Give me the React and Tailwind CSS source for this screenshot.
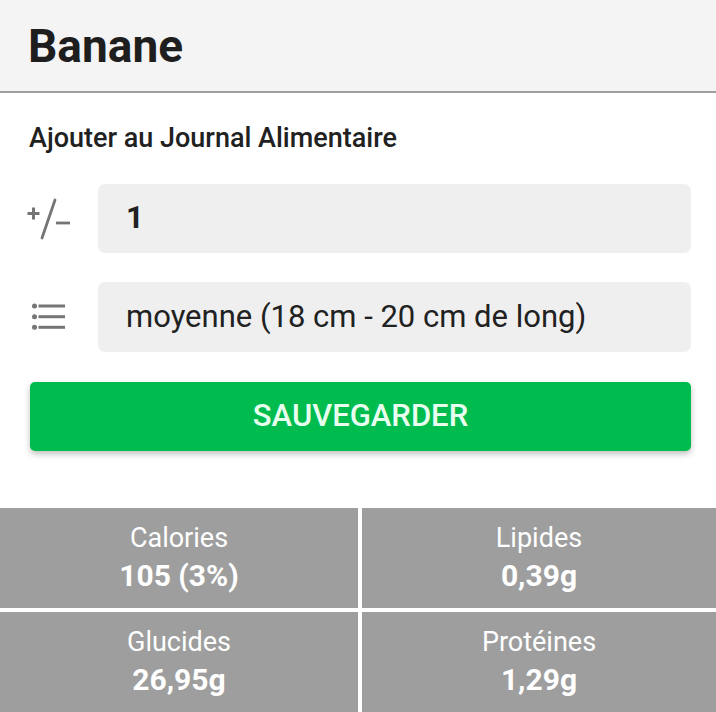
import React from "react";

function PlusMinus() {
  return (
    <svg width="46" height="42" viewBox="0 0 46 42" fill="none" stroke="#757575">
      <path d="M1.5 15.5h12M7.5 9.5v12" strokeWidth="3" />
      <path d="M29 2L16 40" strokeWidth="2.8" strokeLinecap="round" />
      <path d="M30 25h14" strokeWidth="2.8" />
    </svg>
  );
}

function ListIcon() {
  return (
    <svg width="36" height="28" viewBox="0 0 36 28" fill="#757575">
      <circle cx="3.5" cy="3" r="2.5" />
      <circle cx="3.5" cy="13.7" r="2.5" />
      <circle cx="3.5" cy="24.3" r="2.5" />
      <rect x="7.5" y="1.5" width="26.5" height="3" />
      <rect x="7.5" y="12.2" width="26.5" height="3" />
      <rect x="7.5" y="22.8" width="26.5" height="3" />
    </svg>
  );
}

function Cell({ label, value }) {
  return (
    <div className="bg-[#9e9e9e] h-[100px] flex flex-col items-center justify-center text-white">
      <div className="text-[27px] leading-[36px]">{label}</div>
      <div className="text-[30px] leading-[40px] font-bold">{value}</div>
    </div>
  );
}

export default function App() {
  return (
    <div className="w-[716px] h-[712px] overflow-hidden bg-white text-[#212121]" style={{ fontFamily: "Roboto, 'Liberation Sans', sans-serif" }}>
      <div className="h-[93px] bg-[#f4f4f4] border-b-2 border-[#9e9e9e] flex items-center pl-[28px]">
        <div className="text-[46px] font-bold leading-none text-[#1e1e1e]">Banane</div>
      </div>
      <div className="pl-[29px] pr-[25px] pt-[29px]">
        <div className="text-[27px] font-medium leading-[32px]">Ajouter au Journal Alimentaire</div>
        <div className="mt-[30px] flex items-center">
          <div className="w-[69px] flex items-center -ml-[3px] mr-[3px]">
            <PlusMinus />
          </div>
          <div className="flex-1 h-[69px] bg-[#efefef] rounded-[7px] flex items-center pl-[28px] text-[31px] font-bold">1</div>
        </div>
        <div className="mt-[29px] flex items-center">
          <div className="w-[69px] flex items-center pl-[2px]">
            <ListIcon />
          </div>
          <div className="flex-1 h-[70px] bg-[#efefef] rounded-[7px] flex items-center pl-[28px] text-[31px]">moyenne (18 cm - 20 cm de long)</div>
        </div>
        <div className="mt-[30px] ml-[1px] h-[69px] bg-[#00bc4f] rounded-[5px] shadow-[0_3px_6px_rgba(0,0,0,0.25)] flex items-center justify-center text-[#e8fff0] text-[31px] font-medium">SAUVEGARDER</div>
      </div>
      <div className="mt-[57px] grid grid-cols-[358px_1fr] gap-[4px]">
        <Cell label="Calories" value="105 (3%)" />
        <Cell label="Lipides" value="0,39g" />
        <Cell label="Glucides" value="26,95g" />
        <Cell label="Protéines" value="1,29g" />
      </div>
    </div>
  );
}
